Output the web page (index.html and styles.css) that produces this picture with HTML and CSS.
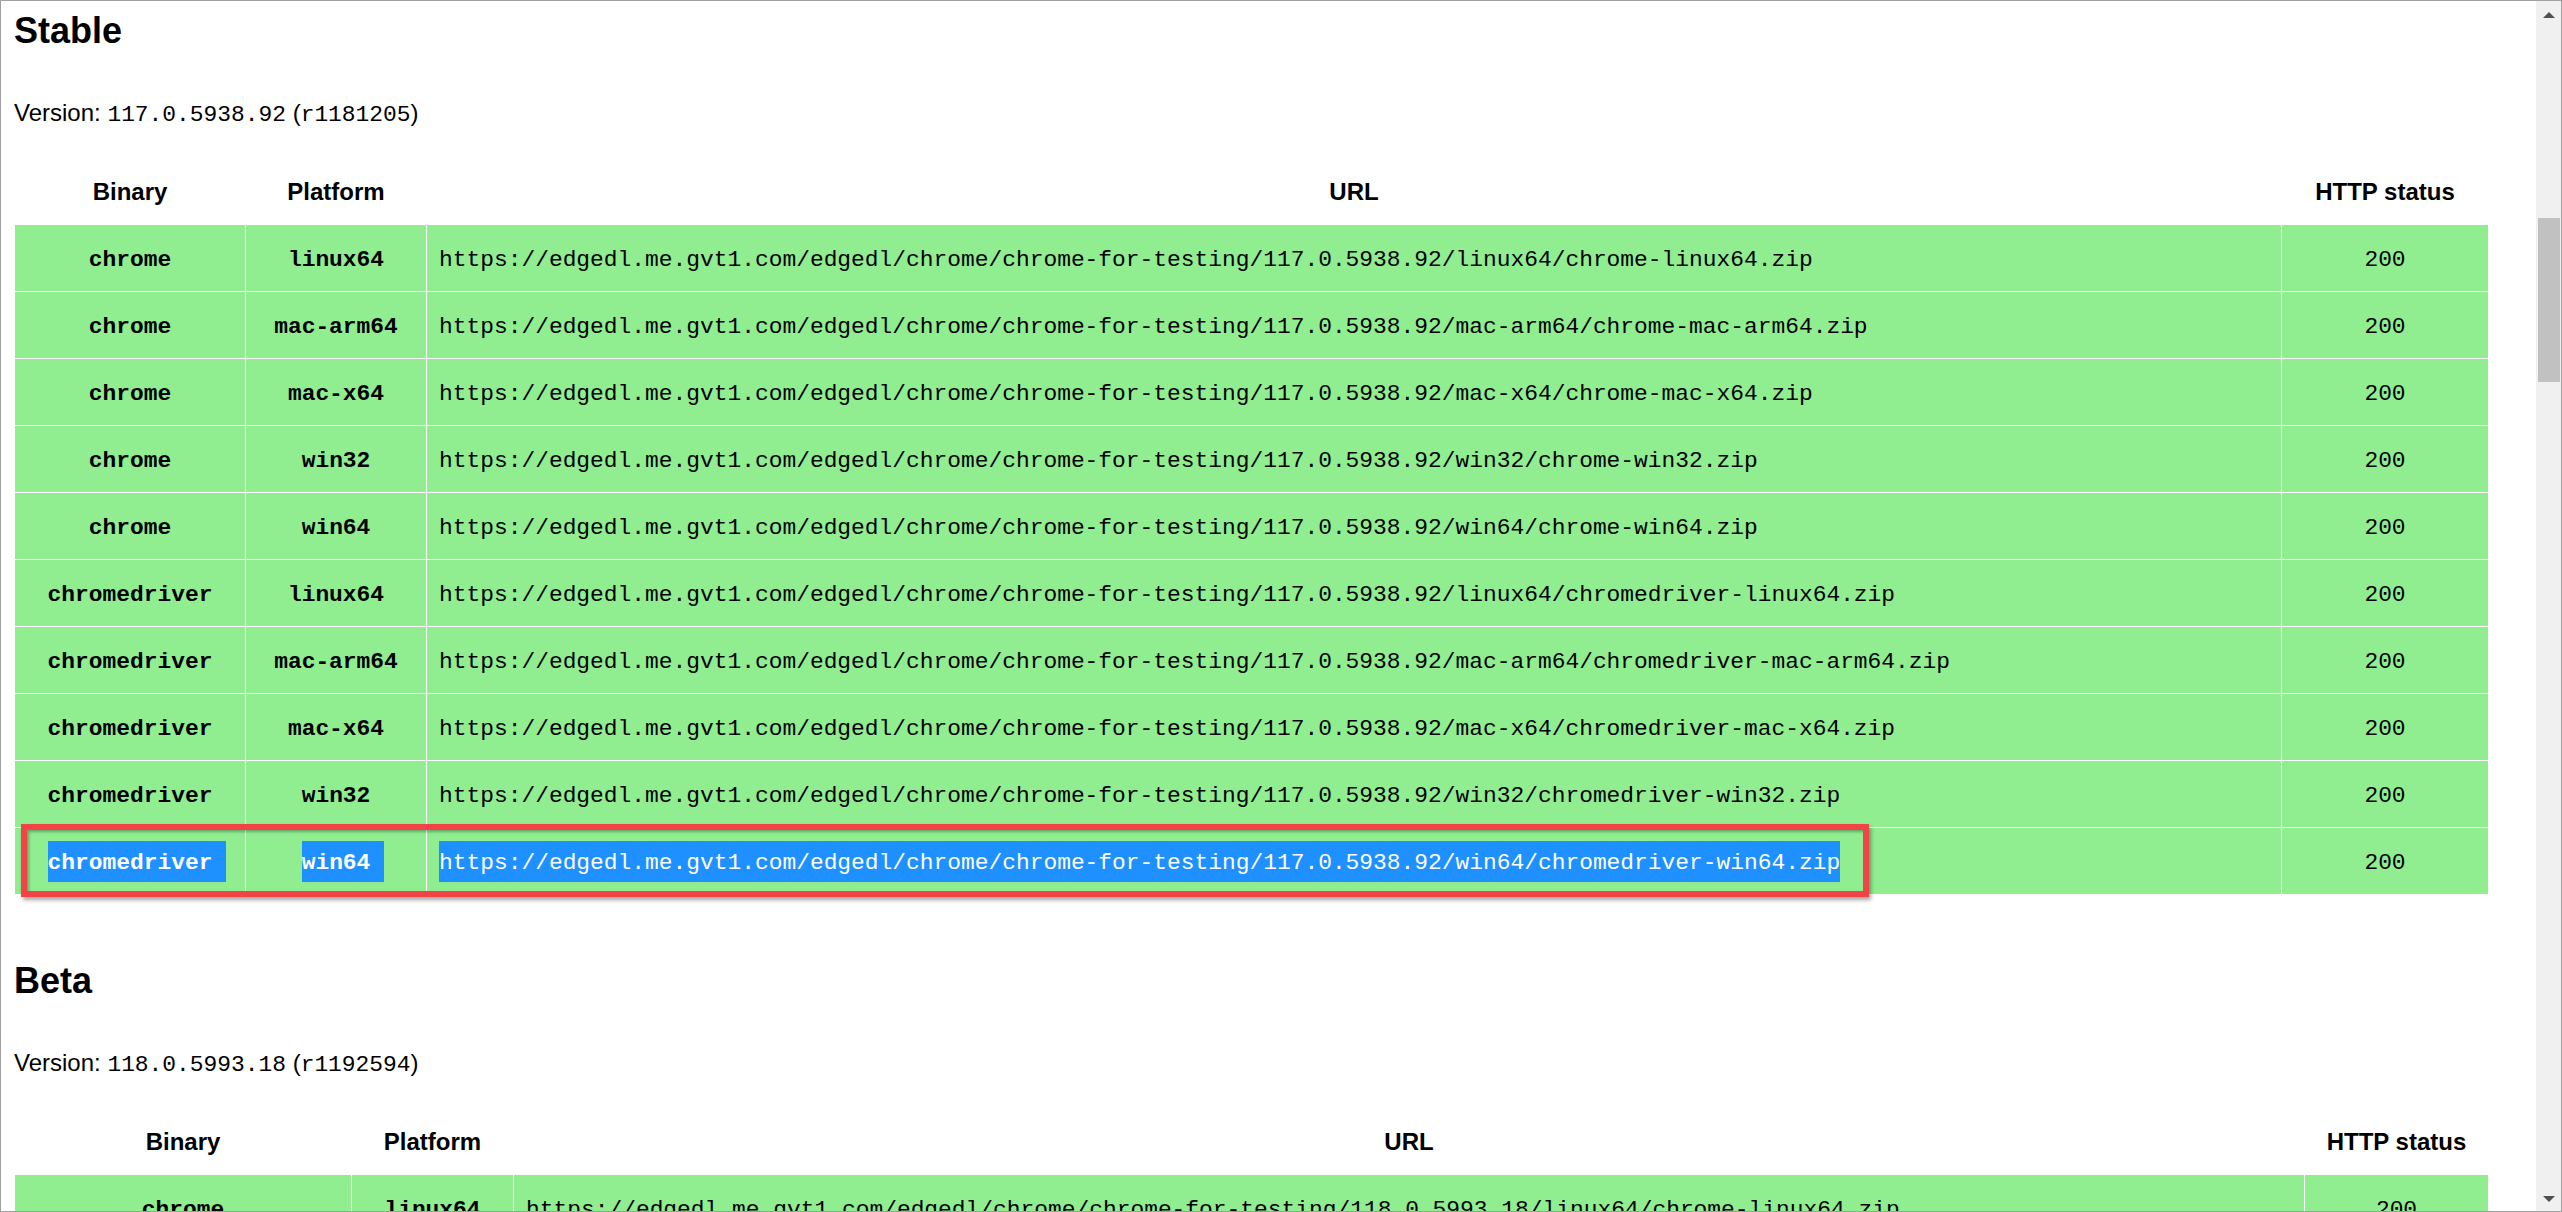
FILE: index.html
```html
<!DOCTYPE html>
<html lang="en">
<head>
<meta charset="utf-8">
<title>Chrome for Testing availability</title>
<link rel="stylesheet" href="styles.css">
</head>
<body>
<div class="window">
  <main class="page">
    <section class="channel">
      <h2>Stable</h2>
      <p class="version">Version: <code>117.0.5938.92</code> (<code>r1181205</code>)</p>
      <div class="table-wrap">
        <table>
          <colgroup><col class="s1"><col class="s2"><col class="s3"><col class="s4"></colgroup>
          <thead>
            <tr><th>Binary</th><th>Platform</th><th>URL</th><th>HTTP status</th></tr>
          </thead>
          <tbody>
            <tr class="ok"><th><code>chrome</code></th><th><code>linux64</code></th><td><code>https://edgedl.me.gvt1.com/edgedl/chrome/chrome-for-testing/117.0.5938.92/linux64/chrome-linux64.zip</code></td><td class="status"><code>200</code></td></tr>
            <tr class="ok"><th><code>chrome</code></th><th><code>mac-arm64</code></th><td><code>https://edgedl.me.gvt1.com/edgedl/chrome/chrome-for-testing/117.0.5938.92/mac-arm64/chrome-mac-arm64.zip</code></td><td class="status"><code>200</code></td></tr>
            <tr class="ok"><th><code>chrome</code></th><th><code>mac-x64</code></th><td><code>https://edgedl.me.gvt1.com/edgedl/chrome/chrome-for-testing/117.0.5938.92/mac-x64/chrome-mac-x64.zip</code></td><td class="status"><code>200</code></td></tr>
            <tr class="ok"><th><code>chrome</code></th><th><code>win32</code></th><td><code>https://edgedl.me.gvt1.com/edgedl/chrome/chrome-for-testing/117.0.5938.92/win32/chrome-win32.zip</code></td><td class="status"><code>200</code></td></tr>
            <tr class="ok"><th><code>chrome</code></th><th><code>win64</code></th><td><code>https://edgedl.me.gvt1.com/edgedl/chrome/chrome-for-testing/117.0.5938.92/win64/chrome-win64.zip</code></td><td class="status"><code>200</code></td></tr>
            <tr class="ok"><th><code>chromedriver</code></th><th><code>linux64</code></th><td><code>https://edgedl.me.gvt1.com/edgedl/chrome/chrome-for-testing/117.0.5938.92/linux64/chromedriver-linux64.zip</code></td><td class="status"><code>200</code></td></tr>
            <tr class="ok"><th><code>chromedriver</code></th><th><code>mac-arm64</code></th><td><code>https://edgedl.me.gvt1.com/edgedl/chrome/chrome-for-testing/117.0.5938.92/mac-arm64/chromedriver-mac-arm64.zip</code></td><td class="status"><code>200</code></td></tr>
            <tr class="ok"><th><code>chromedriver</code></th><th><code>mac-x64</code></th><td><code>https://edgedl.me.gvt1.com/edgedl/chrome/chrome-for-testing/117.0.5938.92/mac-x64/chromedriver-mac-x64.zip</code></td><td class="status"><code>200</code></td></tr>
            <tr class="ok"><th><code>chromedriver</code></th><th><code>win32</code></th><td><code>https://edgedl.me.gvt1.com/edgedl/chrome/chrome-for-testing/117.0.5938.92/win32/chromedriver-win32.zip</code></td><td class="status"><code>200</code></td></tr>
            <tr class="ok"><th><code class="sel trail">chromedriver</code></th><th><code class="sel trail">win64</code></th><td><code class="sel">https://edgedl.me.gvt1.com/edgedl/chrome/chrome-for-testing/117.0.5938.92/win64/chromedriver-win64.zip</code></td><td class="status"><code>200</code></td></tr>
          </tbody>
        </table>
        <div class="annotation"></div>
      </div>
    </section>

    <section class="channel">
      <h2>Beta</h2>
      <p class="version">Version: <code>118.0.5993.18</code> (<code>r1192594</code>)</p>
      <div class="table-wrap">
        <table>
          <colgroup><col class="b1"><col class="b2"><col class="b3"><col class="b4"></colgroup>
          <thead>
            <tr><th>Binary</th><th>Platform</th><th>URL</th><th>HTTP status</th></tr>
          </thead>
          <tbody>
            <tr class="ok"><th><code>chrome</code></th><th><code>linux64</code></th><td><code>https://edgedl.me.gvt1.com/edgedl/chrome/chrome-for-testing/118.0.5993.18/linux64/chrome-linux64.zip</code></td><td class="status"><code>200</code></td></tr>
            <tr class="ok"><th><code>chrome</code></th><th><code>mac-arm64</code></th><td><code>https://edgedl.me.gvt1.com/edgedl/chrome/chrome-for-testing/118.0.5993.18/mac-arm64/chrome-mac-arm64.zip</code></td><td class="status"><code>200</code></td></tr>
            <tr class="ok"><th><code>chrome</code></th><th><code>mac-x64</code></th><td><code>https://edgedl.me.gvt1.com/edgedl/chrome/chrome-for-testing/118.0.5993.18/mac-x64/chrome-mac-x64.zip</code></td><td class="status"><code>200</code></td></tr>
          </tbody>
        </table>
      </div>
    </section>
  </main>
  <div class="scrollbar" aria-hidden="true">
    <div class="sb-btn"><span class="arrow-up"></span></div>
    <div class="sb-track"><div class="sb-thumb"></div></div>
    <div class="sb-btn"><span class="arrow-down"></span></div>
  </div>
</div>
</body>
</html>
```
FILE: styles.css
```css
html, body {
  margin: 0;
  padding: 0;
  background: #ffffff;
}

body {
  font-family: "Liberation Sans", Arial, sans-serif;
  font-size: 24px;
  color: #000000;
}

.window {
  width: 2562px;
  height: 1212px;
  box-sizing: border-box;
  border: 1px solid #a0a0a0;
  display: flex;
  overflow: hidden;
}

.page {
  flex: 1;
  min-width: 0;
  overflow: hidden;
  padding: 9px 0 0 13px;
}

h2 {
  margin: 0 0 48px;
  font-size: 36px;
  line-height: 41px;
  font-weight: bold;
}

.version {
  margin: 0 0 30px;
  line-height: 28px;
}

code {
  font-family: "Liberation Mono", "DejaVu Sans Mono", monospace;
  font-size: 22.9px;
  line-height: 1;
}

.table-wrap {
  position: relative;
  width: 2474px;
  margin-bottom: 65px;
}

table {
  border-collapse: collapse;
  table-layout: fixed;
  width: 2474px;
}

th, td {
  border: 1px solid #ffffff;
  padding: 12px;
  line-height: 42px;
  white-space: nowrap;
}

thead th {
  padding: 13px 12px 11px;
}

th {
  font-weight: bold;
  text-align: center;
}

td {
  text-align: left;
}

td.status {
  text-align: center;
}

tr.ok th, tr.ok td {
  background: #90ee90;
}

.s1 { width: 231px; }
.s2 { width: 181px; }
.s3 { width: 1855px; }
.s4 { width: 207px; }

.b1 { width: 337px; }
.b2 { width: 162px; }
.b3 { width: 1791px; }
.b4 { width: 184px; }

.sel {
  padding: 9px 0 6px;
  background: #1e90ff;
  color: #ffffff;
}

.sel.trail {
  padding-right: 13.7px;
  margin-right: -13.7px;
}

.annotation {
  position: absolute;
  left: 7px;
  top: 667px;
  width: 1848px;
  height: 73px;
  box-sizing: border-box;
  border: 6px solid #f24447;
  box-shadow: 2px 3px 4px rgba(0, 0, 0, 0.35), inset 2px 2px 3px rgba(0, 0, 0, 0.3);
}

.scrollbar {
  flex: none;
  width: 25px;
  background: #f0f0f0;
  display: flex;
  flex-direction: column;
}

.sb-btn {
  height: 25px;
  display: flex;
  align-items: center;
  justify-content: center;
  padding-left: 1px;
}

.sb-track {
  flex: 1;
}

.sb-thumb {
  margin: 192px 1px 0 2px;
  height: 164px;
  background: #c1c1c1;
}

.arrow-up {
  width: 0;
  height: 0;
  border-left: 6px solid transparent;
  border-right: 6px solid transparent;
  border-bottom: 6px solid #505050;
  margin-top: 3px;
}

.arrow-down {
  width: 0;
  height: 0;
  border-left: 6px solid transparent;
  border-right: 6px solid transparent;
  border-top: 6px solid #505050;
}
```
